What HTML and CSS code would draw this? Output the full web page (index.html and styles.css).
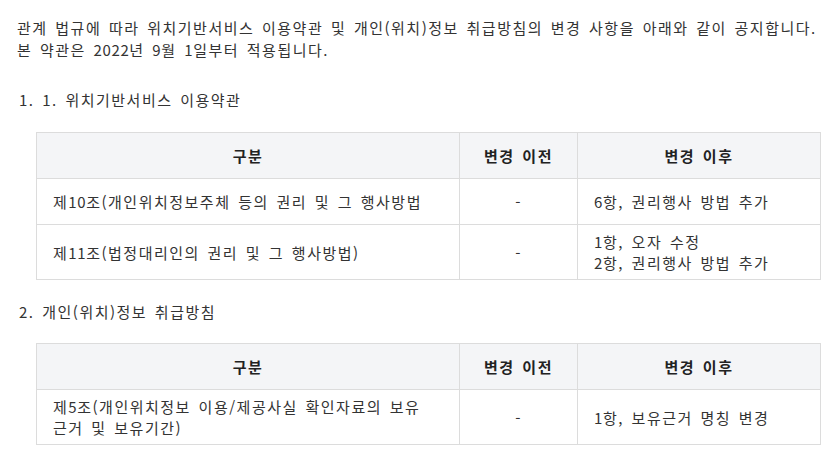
FILE: index.html
```html
<!DOCTYPE html>
<html lang="ko">
<head>
<meta charset="utf-8">
<link rel="stylesheet" href="styles.css">
</head>
<body>
<div class="notice">
  <p class="intro">관계 법규에 따라 위치기반서비스 이용약관 및 개인(위치)정보 취급방침의 변경 사항을 아래와 같이 공지합니다.<br>본 약관은 <span class="num">2022</span>년 <span class="num">9</span>월 <span class="num">1</span>일부터 적용됩니다.</p>

  <h3 class="section-title">1. 1. 위치기반서비스 이용약관</h3>
  <table class="changes">
    <colgroup><col class="c1"><col class="c2"><col class="c3"></colgroup>
    <thead>
      <tr><th>구분</th><th>변경 이전</th><th>변경 이후</th></tr>
    </thead>
    <tbody>
      <tr><td>제<span class="num">10</span>조(개인위치정보주체 등의 권리 및 그 행사방법</td><td class="center">-</td><td><span class="num">6</span>항, 권리행사 방법 추가</td></tr>
      <tr><td>제<span class="num">11</span>조(법정대리인의 권리 및 그 행사방법)</td><td class="center">-</td><td><span class="num">1</span>항, 오자 수정<br><span class="num">2</span>항, 권리행사 방법 추가</td></tr>
    </tbody>
  </table>

  <h3 class="section-title">2. 개인(위치)정보 취급방침</h3>
  <table class="changes">
    <colgroup><col class="c1"><col class="c2"><col class="c3"></colgroup>
    <thead>
      <tr><th>구분</th><th>변경 이전</th><th>변경 이후</th></tr>
    </thead>
    <tbody>
      <tr><td>제<span class="num">5</span>조(개인위치정보 이용/제공사실 확인자료의 보유 근거 및 보유기간)</td><td class="center">-</td><td><span class="num">1</span>항, 보유근거 명칭 변경</td></tr>
    </tbody>
  </table>
</div>
</body>
</html>
```

FILE: styles.css
```css
html, body {
  margin: 0;
  padding: 0;
  background: #ffffff;
}
body {
  font-family: "Noto Sans CJK KR", "Noto Sans", sans-serif;
  font-size: 15px;
  letter-spacing: 1.5px;
  word-spacing: 2px;
  color: #333333;
}
.num {
  letter-spacing: 0.6px;
}
.notice {
  padding: 17px 17px 0 17px;
}
.intro {
  margin: 0;
  line-height: 22px;
}
.section-title {
  margin: 28px 0 21px 2px;
  font-size: 15px;
  font-weight: normal;
  line-height: 22px;
}
.changes + .section-title {
  margin-top: 21px;
  margin-bottom: 20px;
}
.changes {
  margin-left: 19px;
  width: 784px;
  border-collapse: collapse;
  table-layout: fixed;
}
.changes .c1 { width: 423px; }
.changes .c2 { width: 118px; }
.changes .c3 { width: 243px; }
.changes th,
.changes td {
  border: 1px solid #dcdcdc;
  padding: 6px 16px;
  line-height: 21px;
  height: 33px;
  text-align: left;
  vertical-align: middle;
}
.changes th {
  background: #f4f5f7;
  font-weight: bold;
  color: #222222;
  text-align: center;
}
.changes td.center { text-align: center; }
```
